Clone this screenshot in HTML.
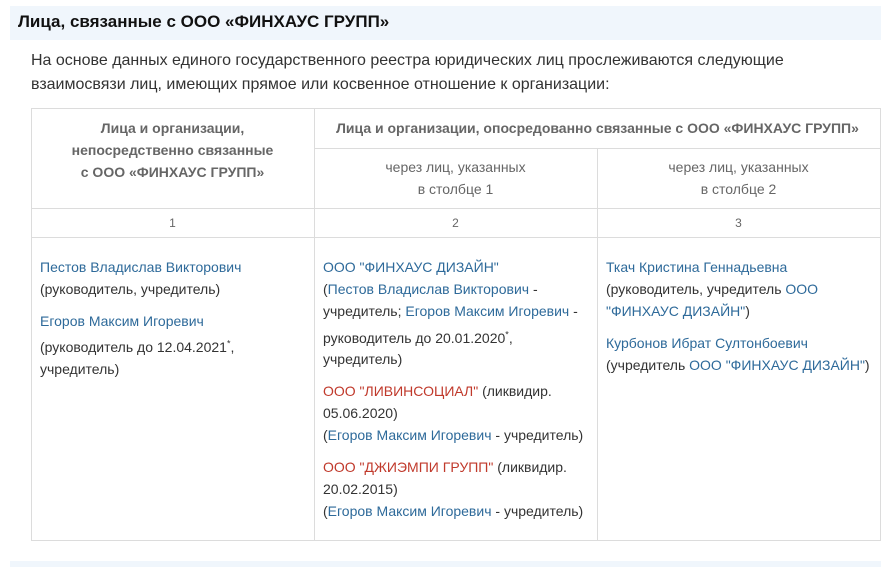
<!DOCTYPE html>
<html><head><meta charset="utf-8"><style>
body{margin:0;width:893px;height:567px;background:#fff;font-family:"Liberation Sans",Arial,sans-serif;position:relative;overflow:hidden;color:#333}
.a{position:absolute;white-space:nowrap;line-height:22px;font-size:14px}
.l{color:#2e6a9a}.r{color:#c0392b}
.h{position:absolute;background:#f0f6fc}
.b{position:absolute;background:#dcdcdc}
.c{position:absolute;text-align:center;font-size:14px;line-height:22px;color:#666}
sup{font-size:9px;line-height:0}
</style></head><body>
<div class="h" style="left:10px;top:6px;width:871px;height:34px"></div>
<div class="a" style="left:18px;top:11px;font-size:17px;font-weight:bold;color:#111">Лица, связанные с ООО «ФИНХАУС ГРУПП»</div>
<div class="a" style="left:31px;top:49px;font-size:16px;line-height:24px">На основе данных единого государственного реестра юридических лиц прослеживаются следующие<br>взаимосвязи лиц, имеющих прямое или косвенное отношение к организации:</div>
<!-- table borders -->
<div class="b" style="left:31px;top:108px;width:850px;height:1px"></div>
<div class="b" style="left:31px;top:540px;width:850px;height:1px"></div>
<div class="b" style="left:31px;top:108px;width:1px;height:433px"></div>
<div class="b" style="left:880px;top:108px;width:1px;height:433px"></div>
<div class="b" style="left:314px;top:108px;width:1px;height:433px"></div>
<div class="b" style="left:597px;top:148px;width:1px;height:393px"></div>
<div class="b" style="left:314px;top:148px;width:567px;height:1px"></div>
<div class="b" style="left:31px;top:208px;width:850px;height:1px"></div>
<div class="b" style="left:31px;top:237px;width:850px;height:1px"></div>
<div class="c" style="left:31px;top:117px;width:283px;font-weight:bold">Лица и организации,<br>непосредственно связанные<br>с ООО «ФИНХАУС ГРУПП»</div>
<div class="c" style="left:314px;top:117px;width:567px;font-weight:bold">Лица и организации, опосредованно связанные с ООО «ФИНХАУС ГРУПП»</div>
<div class="c" style="left:314px;top:156px;width:283px">через лиц, указанных<br>в столбце 1</div>
<div class="c" style="left:597px;top:156px;width:283px">через лиц, указанных<br>в столбце 2</div>
<div class="c" style="left:31px;top:212px;width:283px;font-size:12px">1</div>
<div class="c" style="left:314px;top:212px;width:283px;font-size:12px">2</div>
<div class="c" style="left:597px;top:212px;width:283px;font-size:12px">3</div>
<!-- col1 -->
<div class="a l" style="left:40px;top:256px">Пестов Владислав Викторович</div>
<div class="a" style="left:40px;top:278px">(руководитель, учредитель)</div>
<div class="a l" style="left:40px;top:310px">Егоров Максим Игоревич</div>
<div class="a" style="left:40px;top:336px">(руководитель до 12.04.2021<sup>*</sup>,</div>
<div class="a" style="left:40px;top:358px">учредитель)</div>
<!-- col2 -->
<div class="a l" style="left:323px;top:256px">ООО "ФИНХАУС ДИЗАЙН"</div>
<div class="a" style="left:323px;top:278px">(<span class="l">Пестов Владислав Викторович</span> -</div>
<div class="a" style="left:323px;top:300px">учредитель; <span class="l">Егоров Максим Игоревич</span> -</div>
<div class="a" style="left:323px;top:327px">руководитель до 20.01.2020<sup>*</sup>,</div>
<div class="a" style="left:323px;top:348px">учредитель)</div>
<div class="a" style="left:323px;top:380px"><span class="r">ООО "ЛИВИНСОЦИАЛ"</span> (ликвидир.</div>
<div class="a" style="left:323px;top:402px">05.06.2020)</div>
<div class="a" style="left:323px;top:424px">(<span class="l">Егоров Максим Игоревич</span> - учредитель)</div>
<div class="a" style="left:323px;top:456px"><span class="r">ООО "ДЖИЭМПИ ГРУПП"</span> (ликвидир.</div>
<div class="a" style="left:323px;top:478px">20.02.2015)</div>
<div class="a" style="left:323px;top:500px">(<span class="l">Егоров Максим Игоревич</span> - учредитель)</div>
<!-- col3 -->
<div class="a l" style="left:606px;top:256px">Ткач Кристина Геннадьевна</div>
<div class="a" style="left:606px;top:278px">(руководитель, учредитель <span class="l">ООО</span></div>
<div class="a" style="left:606px;top:300px"><span class="l">"ФИНХАУС ДИЗАЙН"</span>)</div>
<div class="a l" style="left:606px;top:332px">Курбонов Ибрат Султонбоевич</div>
<div class="a" style="left:606px;top:354px">(учредитель <span class="l">ООО "ФИНХАУС ДИЗАЙН"</span>)</div>
<div class="h" style="left:10px;top:561px;width:871px;height:6px"></div>
</body></html>
